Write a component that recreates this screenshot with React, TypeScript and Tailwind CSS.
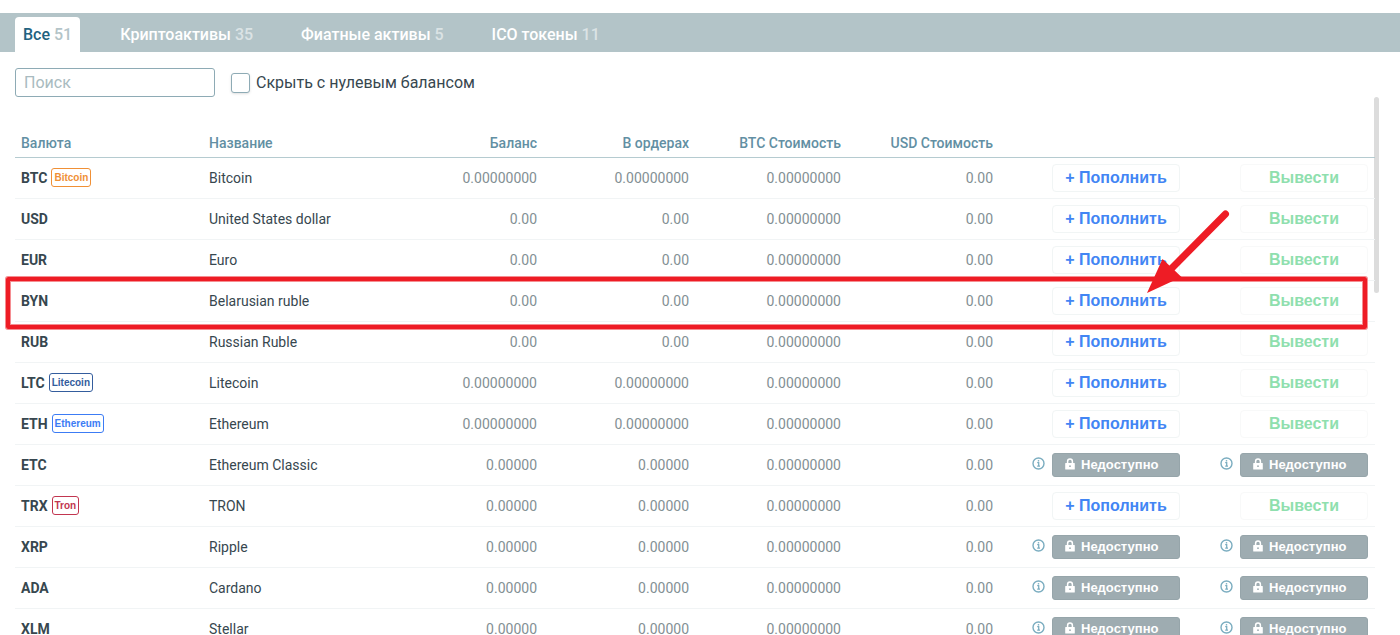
import clsx from "clsx";
import { useState } from "react";

type Row = {
  code: string;
  name: string;
  amount: string;
  badge?: string;
  badgeClass?: string;
  locked?: boolean;
};

const TABS = [
  { id: "all", label: "Все", count: 51 },
  { id: "crypto", label: "Криптоактивы", count: 35 },
  { id: "fiat", label: "Фиатные активы", count: 5 },
  { id: "ico", label: "ICO токены", count: 11 },
];

const ROWS: Row[] = [
  { code: "BTC", name: "Bitcoin", amount: "0.00000000", badge: "Bitcoin", badgeClass: "border-[#f09036] text-[#f09036]" },
  { code: "USD", name: "United States dollar", amount: "0.00" },
  { code: "EUR", name: "Euro", amount: "0.00" },
  { code: "BYN", name: "Belarusian ruble", amount: "0.00" },
  { code: "RUB", name: "Russian Ruble", amount: "0.00" },
  { code: "LTC", name: "Litecoin", amount: "0.00000000", badge: "Litecoin", badgeClass: "border-[#345d9d] text-[#345d9d]" },
  { code: "ETH", name: "Ethereum", amount: "0.00000000", badge: "Ethereum", badgeClass: "border-[#3c7cf5] text-[#3c7cf5]" },
  { code: "ETC", name: "Ethereum Classic", amount: "0.00000", locked: true },
  { code: "TRX", name: "TRON", amount: "0.00000", badge: "Tron", badgeClass: "border-[#c23650] text-[#c23650]" },
  { code: "XRP", name: "Ripple", amount: "0.00000", locked: true },
  { code: "ADA", name: "Cardano", amount: "0.00000", locked: true },
  { code: "XLM", name: "Stellar", amount: "0.00000", locked: true },
];

function InfoIcon() {
  return (
    <svg width="13" height="13" viewBox="0 0 13 13" fill="none" aria-hidden>
      <circle cx="6.5" cy="6.5" r="5.5" stroke="#7badc0" strokeWidth="1.4" />
      <path d="M5.2 5.7h1.5v3.4M5.2 9.2h2.8" stroke="#7badc0" strokeWidth="1.3" />
      <rect x="5.8" y="3.1" width="1.4" height="1.4" fill="#7badc0" />
    </svg>
  );
}

function LockIcon() {
  return (
    <svg width="10" height="12" viewBox="0 0 10 12" className="mb-0.5" aria-hidden>
      <path d="M2.6 6V3.500a2.400 2.400 0 0 1 4.800 0V6" fill="none" stroke="#fff" strokeWidth="1.5" />
      <path d="M.8 5h8.400q.6 0 .6.600v5.300q0 .6-.6.600H.8q-.6 0-.6-.6V5.600Q.2 5 .8 5z" fill="#fff" />
      <circle cx="5" cy="8.200" r=".9" fill="#9eacb1" />
    </svg>
  );
}

function ActionCell({ kind, locked }: { kind: "deposit" | "withdraw"; locked?: boolean }) {
  if (locked) {
    return (
      <div className="flex items-center justify-end gap-[7px] pt-px">
        <button type="button" aria-label="Подробнее" className="mb-1">
          <InfoIcon />
        </button>
        <button
          type="button"
          disabled
          className="flex h-6 w-32 items-center gap-1.5 rounded-[3px] border border-[#96a5aa] bg-[#9eacb1] pl-3 font-['Liberation_Sans',Arial,sans-serif] text-[13px] leading-5 font-bold text-white"
        >
          <LockIcon />
          Недоступно
        </button>
      </div>
    );
  }
  return (
    <div className="flex justify-end">
      <button
        type="button"
        className={clsx(
          "h-7 w-32 rounded border font-['Liberation_Sans',Arial,sans-serif] text-base leading-6 font-bold",
          kind === "deposit"
            ? "border-[#f1f5f5] text-[#4285f4]"
            : "border-[#f8f9f9] text-[#8fdfae]",
        )}
      >
        {kind === "deposit" ? "+ Пополнить" : "Вывести"}
      </button>
    </div>
  );
}

function BalanceTable({ rows }: { rows: Row[] }) {
  return (
    <table className="w-full table-fixed border-collapse text-sm text-[#37474f]">
      <colgroup>
        <col className="w-[188px]" />
        <col className="w-[188px]" />
        <col className="w-[152px]" />
        <col className="w-[152px]" />
        <col className="w-[152px]" />
        <col className="w-[152px]" />
        <col className="w-[188px]" />
        <col className="w-[188px]" />
      </colgroup>
      <thead>
        <tr className="h-[60px] border-b border-[#b5cbd0] align-bottom text-[#628fa3]">
          <th className="px-1.5 pb-1 text-left font-medium">Валюта</th>
          <th className="px-1.5 pb-1 text-left font-medium">Название</th>
          <th className="px-1.5 pb-1 text-right font-medium">Баланс</th>
          <th className="px-1.5 pb-1 text-right font-medium">В ордерах</th>
          <th className="px-1.5 pb-1 text-right font-medium">BTC Стоимость</th>
          <th className="px-1.5 pb-1 text-right font-medium">USD Стоимость</th>
          <th aria-label="Пополнить" />
          <th aria-label="Вывести" />
        </tr>
      </thead>
      <tbody>
        {rows.map((row) => (
          <tr key={row.code} className="h-[41px] border-b border-[#f1f4f5]">
            <td className="px-1.5">
              <div className="flex items-center gap-1">
                <span className="font-bold">{row.code}</span>
                {row.badge ? (
                  <span
                    className={clsx(
                      "rounded-[3px] border px-0.5 font-['Liberation_Sans',Arial,sans-serif] text-[10px] leading-[17px] font-bold",
                      row.badgeClass,
                    )}
                  >
                    {row.badge}
                  </span>
                ) : null}
              </div>
            </td>
            <td className="px-1.5">{row.name}</td>
            <td className="px-1.5 text-right text-[#839094]">{row.amount}</td>
            <td className="px-1.5 text-right text-[#839094]">{row.amount}</td>
            <td className="px-1.5 text-right text-[#839094]">0.00000000</td>
            <td className="px-1.5 text-right text-[#839094]">0.00</td>
            <td className="pr-[7px]">
              <ActionCell kind="deposit" locked={row.locked} />
            </td>
            <td className="pr-[7px]">
              <ActionCell kind="withdraw" locked={row.locked} />
            </td>
          </tr>
        ))}
      </tbody>
    </table>
  );
}

// Red frame round the BYN row and the arrow to its deposit button.
function Highlight() {
  return (
    <>
      <div className="pointer-events-none absolute top-[180px] right-[7px] left-[-9px] h-[52px] rounded-xs border-4 border-[#ee1c25] inset-ring inset-ring-[#f58e92] ring ring-[#f58e92]" />
      <svg
        className="pointer-events-none absolute top-[110px] right-[140px]"
        width="90"
        height="90"
        viewBox="0 0 90 90"
        aria-hidden
      >
        <path d="M81.500 7L28 61" stroke="#ee1c25" strokeWidth="7" strokeLinecap="round" />
        <path d="M3 86L18.500 52L37.500 70z" fill="#ee1c25" />
      </svg>
    </>
  );
}

export default function App() {
  const [activeTab, setActiveTab] = useState("all");
  const [search, setSearch] = useState("");
  const [hideZero, setHideZero] = useState(false);

  const query = search.trim().toLowerCase();
  const rows = ROWS.filter((r) => `${r.code} ${r.name}`.toLowerCase().includes(query));

  return (
    <div className="flex h-screen flex-col overflow-hidden bg-white pt-[13px] font-[Roboto,sans-serif] text-[#37474f]">
      <nav className="flex shrink-0 gap-8 bg-[#b3c4c8] px-[15px] pt-1" aria-label="Активы">
        {TABS.map((tab) => {
          const active = tab.id === activeTab;
          return (
            <button
              key={tab.id}
              type="button"
              onClick={() => setActiveTab(tab.id)}
              className={clsx(
                "h-[35px] rounded-t px-2 text-base font-medium",
                active ? "bg-white text-[#22627f]" : "text-white",
              )}
            >
              {tab.label}{" "}
              <span className={active ? "text-[#b3c4c8]" : "text-[#dbe3e5]"}>{tab.count}</span>
            </button>
          );
        })}
      </nav>

      <div className="flex shrink-0 items-center gap-4 px-[15px] pt-4">
        <input
          type="text"
          aria-label="Поиск"
          placeholder="Поиск"
          value={search}
          onChange={(e) => setSearch(e.target.value)}
          className="h-[29px] w-[200px] rounded-[3px] border border-[#8eabb5] px-2 text-base outline-none placeholder:text-[#a9bbc0]"
        />
        <label className="flex items-center gap-1.5 text-base">
          <input
            type="checkbox"
            checked={hideZero}
            onChange={(e) => setHideZero(e.target.checked)}
            className="h-5 w-[19px] appearance-none rounded-[3px] border border-[#8eabb5] bg-white shadow-sm checked:bg-[#8eabb5]"
          />
          Скрыть с нулевым балансом
        </label>
      </div>

      <div className="flex min-h-0 flex-1 pr-[21px] pl-[15px]">
        <div className="relative min-w-0 flex-1">
          <BalanceTable rows={rows} />
          <Highlight />
        </div>
        <div className="h-[196px] w-[5px] rounded-full bg-[#dcdcdc]" />
      </div>
    </div>
  );
}
